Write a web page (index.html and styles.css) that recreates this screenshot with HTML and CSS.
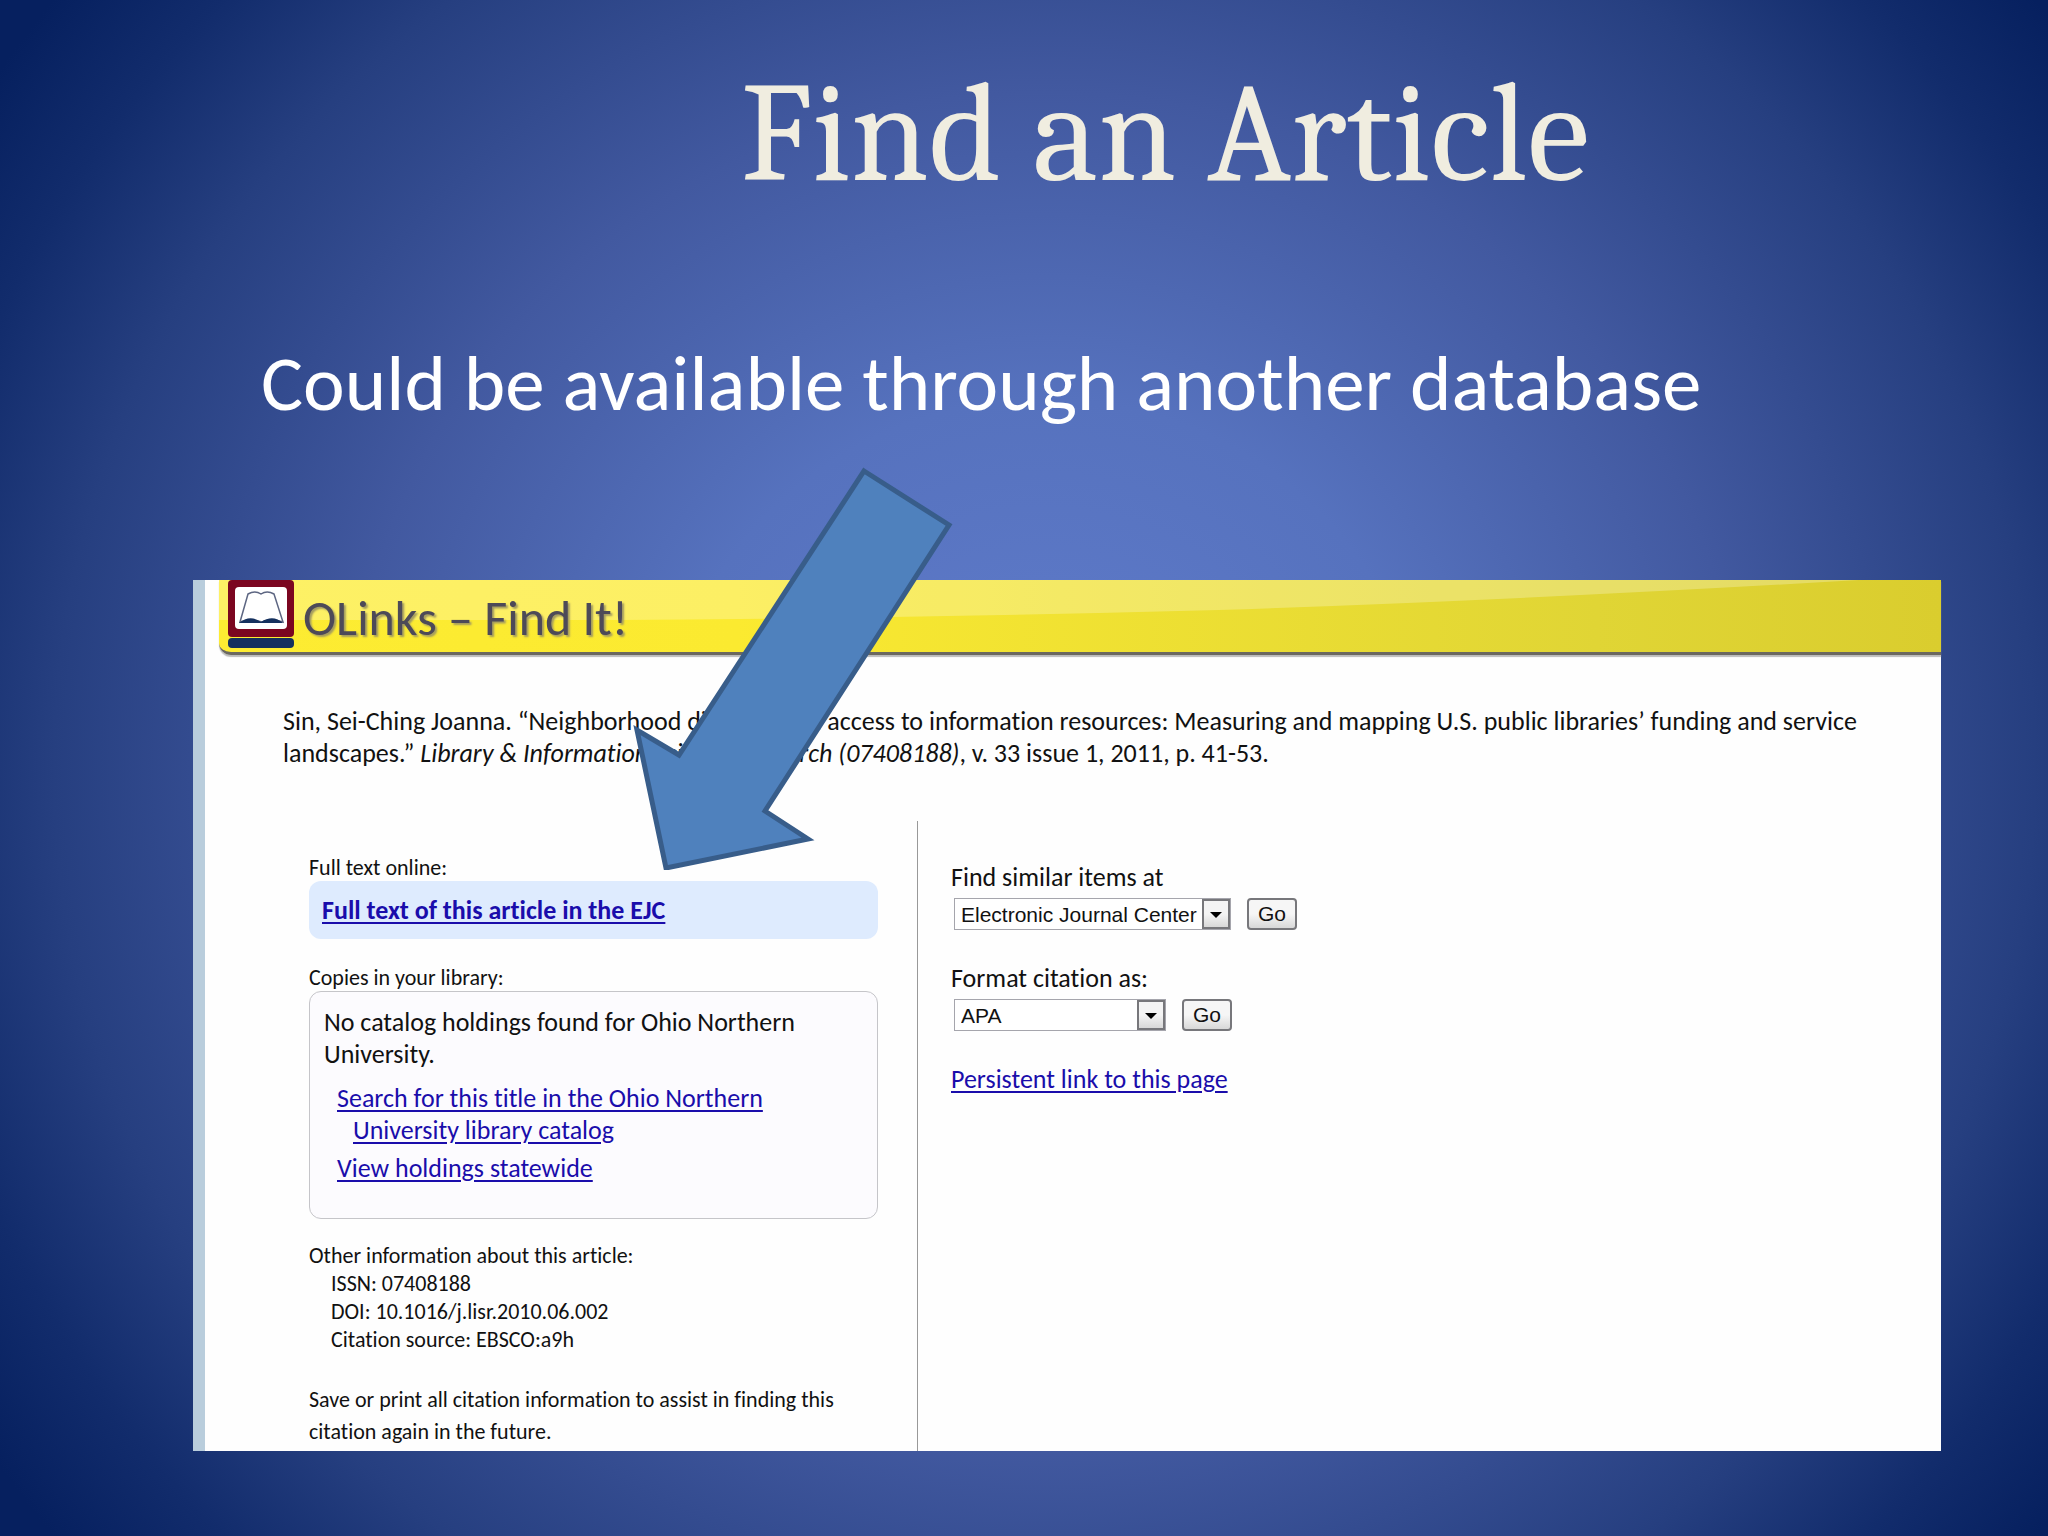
FILE: index.html
```
<!DOCTYPE html>
<html lang="en">
<head>
  <meta charset="UTF-8">
  <meta name="viewport" content="width=device-width, initial-scale=1.0">
  <title>Find an Article</title>
  <link rel="stylesheet" href="styles.css">
</head>
<body>
  <h1>Find an Article</h1>
  <p class="lead">Could be available through another database</p>

  <main class="panel">
    <header class="banner">
      <svg class="sheen" viewBox="0 0 1722 72" preserveAspectRatio="none" aria-hidden="true">
        <path d="M0 0H1640Q1300 20 1000 30Q700 38 400 40H0Z" fill="#fff" fill-opacity="0.25"/>
      </svg>
      <svg class="logo" viewBox="0 0 68 70" aria-hidden="true">
        <rect x="1" y="0" width="66" height="57" rx="4" fill="#7b0620"/>
        <rect x="8" y="7" width="52" height="42" rx="4" fill="#fff"/>
        <path d="M13 42L21 14Q28 10 34 14Q40 10 47 14L56 42Q44 38 35 42Q24 38 13 42Z" fill="#fff" stroke="#5d6682" stroke-width="1.5"/>
        <path d="M12 43Q23 34 34 42Q46 34 56 43Z" fill="#14305e"/>
        <rect x="1" y="58" width="66" height="10" rx="4" fill="#14305e"/>
      </svg>
      <h2>OLinks – Find It!</h2>
    </header>

    <p class="citation">Sin, Sei-Ching Joanna. “Neighborhood disparities in access to information resources: Measuring and mapping U.S. public libraries’ funding and service<br>landscapes.” <i>Library &amp; Information Science Research (07408188)</i>, v. 33 issue 1, 2011, p. 41-53.</p>

    <div class="columns">
      <section class="left">
        <h3>Full text online:</h3>
        <div class="fulltext"><a href="#">Full text of this article in the EJC</a></div>

        <h3>Copies in your library:</h3>
        <div class="holdings">
          <p>No catalog holdings found for Ohio Northern<br>University.</p>
          <ul>
            <li><a href="#">Search for this title in the Ohio Northern<br>University library catalog</a></li>
            <li><a href="#">View holdings statewide</a></li>
          </ul>
        </div>

        <div class="info">
          <p>Other information about this article:</p>
          <ul>
            <li>ISSN: 07408188</li>
            <li>DOI: 10.1016/j.lisr.2010.06.002</li>
            <li>Citation source: EBSCO:a9h</li>
          </ul>
        </div>

        <p class="save">Save or print all citation information to assist in finding this<br>citation again in the future.</p>
      </section>

      <section class="right">
        <form>
          <label for="similar">Find similar items at</label>
          <div class="row">
            <span class="select wide">
              <select id="similar"><option>Electronic Journal Center</option></select>
              <span class="drop"></span>
            </span>
            <button type="button">Go</button>
          </div>
        </form>
        <form>
          <label for="format">Format citation as:</label>
          <div class="row">
            <span class="select">
              <select id="format"><option>APA</option></select>
              <span class="drop"></span>
            </span>
            <button type="button">Go</button>
          </div>
        </form>
        <a href="#">Persistent link to this page</a>
      </section>
    </div>

    <!-- callout pointing at the full text link -->
    <svg class="arrow" viewBox="0 0 330 410" aria-hidden="true">
      <path d="M234 11L319 65L135 351L178 379L36 408L7 270L49 295Z" fill="#4f81bd" stroke="#385d8a" stroke-width="5"/>
    </svg>
  </main>
</body>
</html>
```

FILE: styles.css
```
* {
  box-sizing: border-box;
}
body {
  margin: 0;
  min-height: 100vh;
  padding: 60px 107px 85px 193px;
  font-family: Carlito, Lato, sans-serif;
  font-size: 26px;
  font-variant-ligatures: none;
  line-height: 32px;
  color: #111;
  background: radial-gradient(ellipse 62% 80% at 51% 50%, #607ccc 0%, #5672be 30%, #4259a0 55%, #263f80 78%, #122c6c 90%, #06205f 100%);
}
h1, h2, h3, p, ul {
  margin: 0;
  padding: 0;
  font-weight: 400;
}
ul {
  list-style: none;
}
a {
  color: #1a0dab;
  text-underline-offset: 3px;
}
h1 {
  padding-left: 196px;
  text-align: center;
  font-family: Cambria, Caladea, "Liberation Serif", serif;
  font-size: 140px;
  line-height: 150px;
  color: #f0ede0;
}
.lead {
  margin: 123px 0 146px 68px;
  font-size: 79px;
  line-height: 101px;
  color: #fff;
  white-space: nowrap;
}
.panel {
  position: relative;
  background: #fefefe;
  border-left: 12px solid #b9cddc;
}
.banner {
  position: relative;
  display: flex;
  align-items: flex-start;
  gap: 8px;
  height: 75px;
  margin-left: 14px;
  padding-left: 8px;
  background: linear-gradient(to right, #fdec32, #fbea30 30%, #e0d535 80%, #dacd2e);
  border-bottom: 3px solid #6b6860;
  border-bottom-left-radius: 12px;
  box-shadow: 0 2px 1px #bbb;
}
.sheen {
  position: absolute;
  left: 0;
  top: 0;
  width: 100%;
  height: 100%;
}
.logo {
  position: relative;
  width: 68px;
  height: 70px;
}
h2 {
  position: relative;
  padding-top: 7px;
  font-size: 50px;
  line-height: 62px;
  color: #4d4a58;
  text-shadow: 2px 2px 2px #a39b60;
}
.citation {
  margin: 50px 0 52px 78px;
  white-space: nowrap;
}
.columns {
  display: flex;
}
.left {
  flex: 0 0 713px;
  padding: 34px 39px 3px 104px;
  border-right: 1px solid #999;
}
h3 {
  font-size: 22px;
  line-height: 26px;
}
.fulltext {
  height: 58px;
  margin-bottom: 26px;
  padding: 13px;
  border-radius: 12px;
  background: #deebfe;
  font-weight: 700;
}
.holdings {
  height: 228px;
  padding: 14px;
  border: 1px solid #c5c5c9;
  border-radius: 12px;
  background: #fcfbfe;
}
.holdings li {
  margin-top: 6px;
  padding-left: 29px;
  text-indent: -16px;
}
.holdings ul {
  margin-top: 12px;
}
.info {
  margin: 23px 0 30px;
  font-size: 22px;
  line-height: 28px;
}
.info li {
  padding-left: 22px;
}
.save {
  font-size: 22px;
}
.right {
  padding: 40px 0 0 33px;
}
label {
  display: block;
}
.row {
  display: flex;
  gap: 16px;
  margin: 5px 0 32px 3px;
}
.select {
  position: relative;
  width: 212px;
}
.select.wide {
  width: 277px;
}
select, button {
  height: 32px;
  font-family: "Liberation Sans", sans-serif;
  font-size: 21px;
  color: #111;
}
select {
  display: block;
  appearance: none;
  width: 100%;
  padding: 0 6px;
  border: 1px solid #a5a5ac;
  border-radius: 0;
  background: #fff;
}
.drop {
  position: absolute;
  right: 1px;
  top: 1px;
  width: 28px;
  height: 30px;
  border: 2px solid #77777b;
  background: linear-gradient(#f4f4f4 50%, #d8d8d8);
  pointer-events: none;
}
.drop::after {
  content: "";
  position: absolute;
  left: 6px;
  top: 11px;
  border: 6px solid transparent;
  border-top-color: #000;
  border-bottom: 0;
}
button {
  width: 50px;
  padding: 0;
  border: 2px solid #77777b;
  border-radius: 4px;
  background: linear-gradient(#f6f6f6 50%, #d8d8d8);
}
.arrow {
  position: absolute;
  left: 425px;
  top: -120px;
  width: 330px;
  height: 410px;
}
```
